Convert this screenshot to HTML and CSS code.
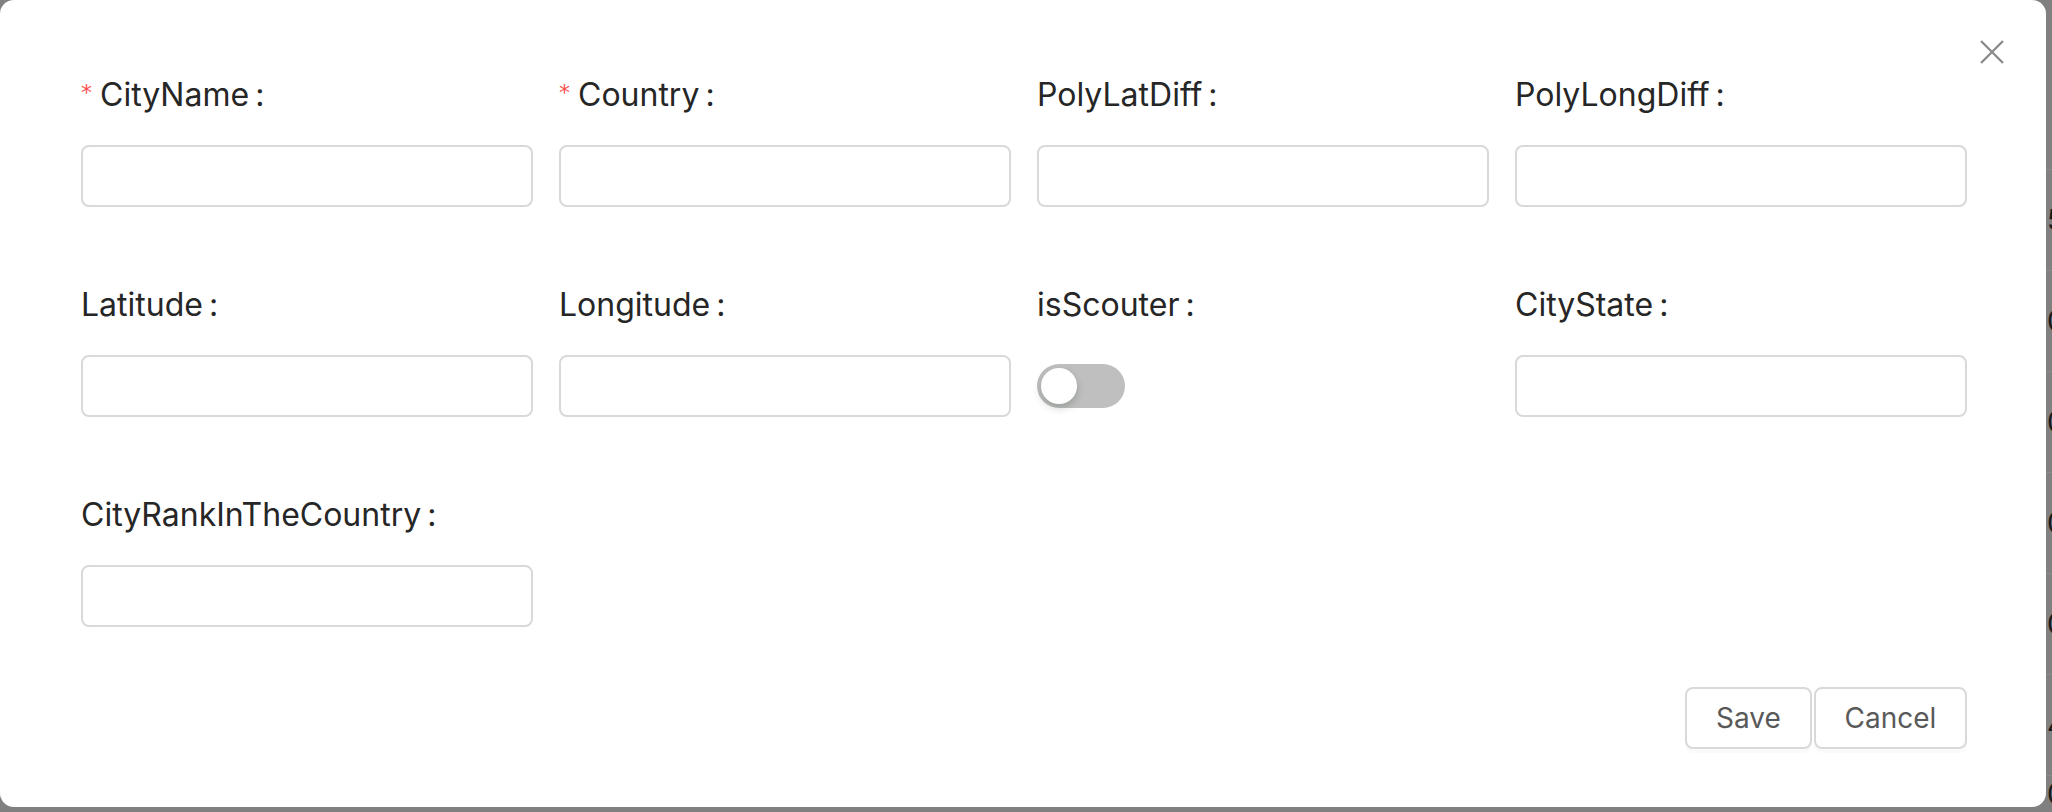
FILE: index.html
```html
<!DOCTYPE html>
<html lang="en">
<head>
<meta charset="utf-8">
<title>Edit City</title>
<link rel="stylesheet" href="styles.css">
</head>
<body>
<div class="page">
  <div class="page-head"></div>
  <div class="page-row"><span></span><span class="cell">5</span></div>
  <div class="page-row"><span></span><span class="cell">0</span></div>
  <div class="page-row"><span></span><span class="cell">0</span></div>
  <div class="page-row"><span></span><span class="cell">0</span></div>
  <div class="page-row"><span></span><span class="cell">0</span></div>
  <div class="page-row"><span></span><span class="cell">4</span></div>
  <div class="page-row last"><span></span><span class="cell">0</span></div>
</div>

<div class="modal">
  <button class="close" type="button" aria-label="Close">
    <svg viewBox="0 0 24 24" width="24" height="24"><path d="M1 1 L23 23 M23 1 L1 23" stroke="#8c8c8c" stroke-width="2.4" fill="none"/></svg>
  </button>
  <form class="form">
    <div class="grid">
      <div class="item">
        <label class="label"><span class="req">*</span>CityName<span class="colon">:</span></label>
        <input class="input" type="text">
      </div>
      <div class="item">
        <label class="label"><span class="req">*</span>Country<span class="colon">:</span></label>
        <input class="input" type="text">
      </div>
      <div class="item">
        <label class="label">PolyLatDiff<span class="colon">:</span></label>
        <input class="input" type="text">
      </div>
      <div class="item">
        <label class="label">PolyLongDiff<span class="colon">:</span></label>
        <input class="input" type="text">
      </div>
      <div class="item">
        <label class="label">Latitude<span class="colon">:</span></label>
        <input class="input" type="text">
      </div>
      <div class="item">
        <label class="label">Longitude<span class="colon">:</span></label>
        <input class="input" type="text">
      </div>
      <div class="item">
        <label class="label">isScouter<span class="colon">:</span></label>
        <div class="switch-wrap"><button class="switch" type="button" role="switch" aria-checked="false"><span class="handle"></span></button></div>
      </div>
      <div class="item">
        <label class="label">CityState<span class="colon">:</span></label>
        <input class="input" type="text">
      </div>
      <div class="item">
        <label class="label">CityRankInTheCountry<span class="colon">:</span></label>
        <input class="input" type="text">
      </div>
    </div>
    <div class="footer">
      <button class="btn btn-save" type="button">Save</button>
      <button class="btn btn-cancel" type="button">Cancel</button>
    </div>
  </form>
</div>
</body>
</html>
```

FILE: styles.css
```css
* { box-sizing: border-box; }

html, body {
  margin: 0;
  padding: 0;
}

body {
  width: 2052px;
  height: 812px;
  overflow: hidden;
  background: #808080;
  font-family: Inter, "Noto Sans", sans-serif;
  position: relative;
}

/* page behind the overlay */
.page {
  width: 2052px;
  height: 812px;
  overflow: hidden;
}
.page-head {
  height: 170px;
  border-bottom: 1px solid #8a8a8a;
}
.page-row {
  display: grid;
  grid-template-columns: 2047px 1fr;
  height: 101px;
  align-items: center;
  border-bottom: 1px solid #8a8a8a;
}
.page-row.last {
  height: 35px;
  align-items: end;
  border-bottom: 0;
}
.cell {
  font-size: 28px;
  line-height: 34px;
  color: #1a1a1a;
  white-space: nowrap;
}

/* modal */
.modal {
  position: absolute;
  top: 0;
  left: 0;
  width: 2046px;
  height: 807px;
  background: #ffffff;
  border-radius: 14px;
  padding: 62px 78px 58px 81px;
}

.close {
  position: absolute;
  top: 40px;
  right: 42px;
  width: 24px;
  height: 24px;
  padding: 0;
  border: 0;
  background: transparent;
  display: flex;
}

.grid {
  display: grid;
  grid-template-columns: repeat(4, 452px);
  column-gap: 26px;
  row-gap: 65px;
}

.item {
  display: flex;
  flex-direction: column;
}

.label {
  height: 64px;
  margin-bottom: 19px;
  display: flex;
  align-items: center;
  font-size: 32px;
  color: #262626;
  white-space: nowrap;
}

.req {
  color: #ff4d4f;
  font-family: "DejaVu Sans", sans-serif;
  font-size: 22px;
  margin-right: 8px;
  position: relative;
  top: -2px;
}

.colon {
  margin-left: 6px;
}

.input {
  height: 62px;
  width: 100%;
  border: 2px solid #d9d9d9;
  border-radius: 8px;
  background: #fff;
  font: inherit;
  padding: 0 22px;
  outline: none;
}

.switch-wrap {
  height: 62px;
  display: flex;
  align-items: center;
}

.switch {
  width: 88px;
  height: 44px;
  border-radius: 22px;
  border: 0;
  padding: 0;
  background: #bfbfbf;
  display: flex;
  align-items: center;
}

.handle {
  width: 36px;
  height: 36px;
  margin-left: 4px;
  border-radius: 50%;
  background: #fff;
  box-shadow: 0 4px 8px rgba(0, 35, 11, 0.2);
}

.footer {
  margin-top: 60px;
  display: flex;
  justify-content: flex-end;
  gap: 2px;
  padding-right: 1px;
}

.btn {
  height: 62px;
  padding: 0;
  border: 2px solid #d9d9d9;
  border-radius: 8px;
  background: #fff;
  font-family: Inter, "Noto Sans", sans-serif;
  font-size: 28px;
  color: #595959;
  box-shadow: 0 4px 0 rgba(0, 0, 0, 0.02);
}

.btn-save { width: 127px; }
.btn-cancel { width: 153px; }
```
